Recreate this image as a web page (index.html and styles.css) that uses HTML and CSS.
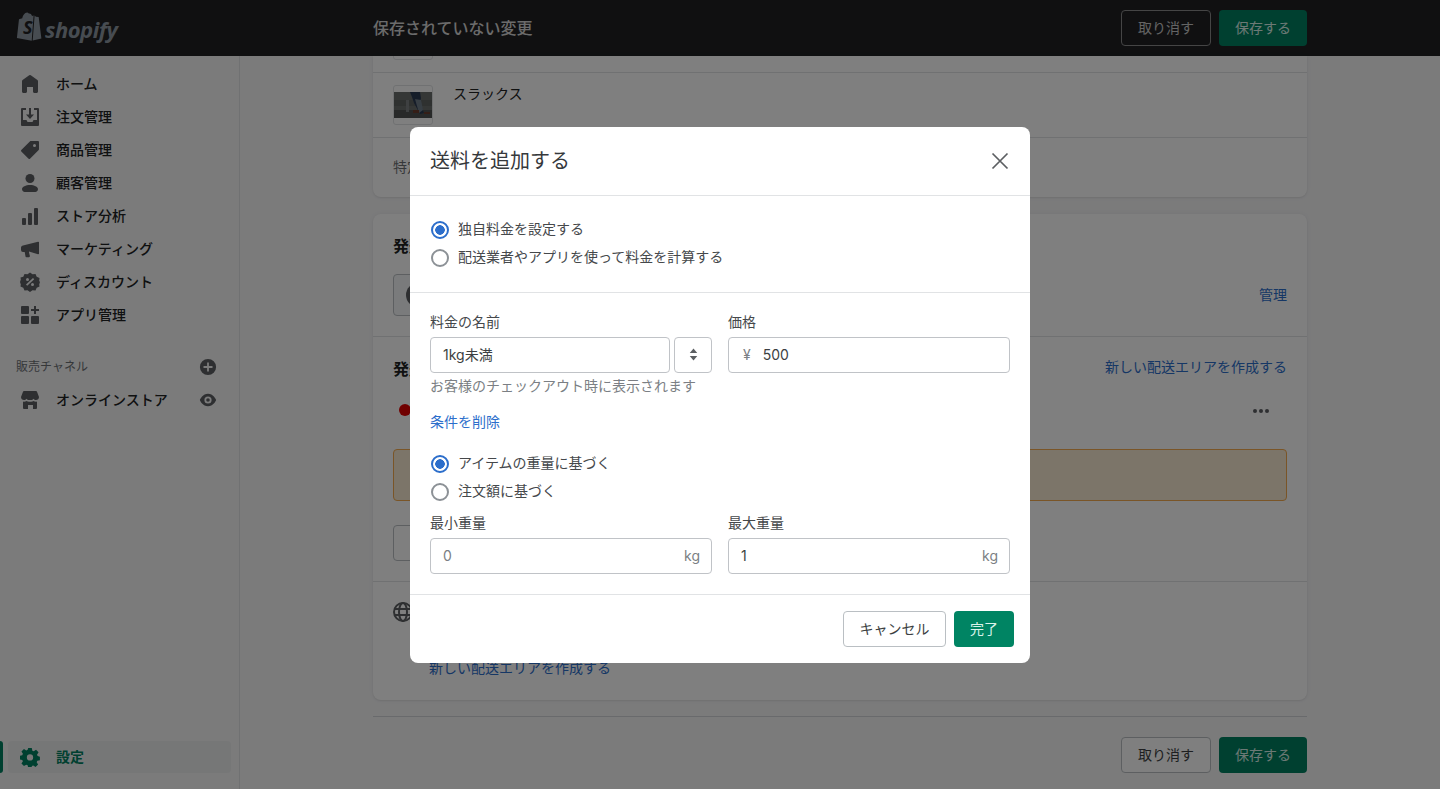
FILE: index.html
```html
<!DOCTYPE html>
<html lang="ja">
<head>
    <meta charset="UTF-8">
    <title>送料を追加する</title>
    <link rel="stylesheet" href="styles.css">
</head>
<body>
    <header class="topbar">
        <div class="logo">
            <svg class="logo-bag" viewBox="0 0 26 30" width="26" height="30">
                <path d="M17.6 3.6c-.3-.1-1.2.3-1.5.4C15.5 2.300 14.500 1.500 13.200 1.500h-.4C12.300.9 11.700.6 11.100.6 8.600.7 6.800 3.900 6.300 6.200L3.800 7c-.8.200-.8.300-.9 1L.9 26l14.800 2.800z" />
                <path d="M18.600 3.600 19.900 4.800l2.500.2c.2 0 .3.100.3.300L25.400 26.400 16.700 28.600z" />
                <text x="7" y="22" class="logo-s">S</text>
            </svg>
            <span class="logo-text">shopify</span>
        </div>
        <div class="topbar-main">
            <span class="topbar-title">保存されていない変更</span>
            <div class="actions">
                <button class="btn btn-dark">取り消す</button>
                <button class="btn btn-green">保存する</button>
            </div>
        </div>
    </header>

    <div class="frame">
        <nav class="sidebar">
            <ul class="nav">
                <li class="nav-item">
                    <svg class="icon" viewBox="0 0 20 20"><path d="M18 7.300V17.500c0 .8-.7 1.500-1.500 1.500h-2c-.8 0-1.500-.7-1.500-1.500V13H7v4.500C7 18.300 6.300 19 5.500 19h-2C2.700 19 2 18.300 2 17.500V7.300c0-.5.200-.9.600-1.200l6.600-4.900a1.500 1.500 0 0 1 1.600 0l6.600 4.900c.4.300.6.700.6 1.200z"/></svg>
                    ホーム
                </li>
                <li class="nav-item">
                    <svg class="icon" viewBox="0 0 20 20"><path d="M2 1h4v2H3v10h3.500l1 2h5l1-2H17V3h-3V1h4a1 1 0 0 1 1 1v16a1 1 0 0 1-1 1H2a1 1 0 0 1-1-1V2a1 1 0 0 1 1-1z"/><path d="M9 1h2v6.500h3L10 12 6 7.500h3z"/></svg>
                    注文管理
                </li>
                <li class="nav-item">
                    <svg class="icon" viewBox="0 0 20 20"><path d="M18 1h-7.200c-.3 0-.5.100-.7.300L1.300 10a1 1 0 0 0 0 1.400l7.300 7.300a1 1 0 0 0 1.400 0l8.700-8.700c.2-.2.300-.5.300-.7V2a1 1 0 0 0-1-1zm-3.500 6a1.500 1.500 0 1 1 0-3 1.500 1.500 0 0 1 0 3z"/></svg>
                    商品管理
                </li>
                <li class="nav-item">
                    <svg class="icon" viewBox="0 0 20 20"><circle cx="10" cy="5.500" r="4.500"/><path d="M10 12c-4.200 0-8 1.700-8 4.200C2 18.300 4 19 6 19h8c2 0 4-.7 4-2.800 0-2.500-3.800-4.200-8-4.200z"/></svg>
                    顧客管理
                </li>
                <li class="nav-item">
                    <svg class="icon" viewBox="0 0 20 20"><rect x="2" y="12" width="4" height="7" rx="1"/><rect x="8" y="7" width="4" height="12" rx="1"/><rect x="14" y="2" width="4" height="17" rx="1"/></svg>
                    ストア分析
                </li>
                <li class="nav-item">
                    <svg class="icon" viewBox="0 0 20 20"><path d="M19 3v12l-1 .3L9 12.500V13.500l.9 3.500a1 1 0 0 1-1 1.200H6.500a1 1 0 0 1-1-.8L4.700 13H3a2 2 0 0 1-2-2V8.500C1 7.500 2 6.800 3 6.500L18 2.700z"/></svg>
                    マーケティング
                </li>
                <li class="nav-item">
                    <svg class="icon" viewBox="0 0 20 20"><path fill-rule="evenodd" d="M10 .5l2.500 1.800 3-.3 1.200 2.800 2.800 1.300-.3 3L20 10l-.8 2.400.3 2-2.800 1.300-1.200 2.800-3-.3L10 20l-2.500-1.800-3 .3-1.200-2.800-2.800-1.300.3-2L0 10l.8-2.400-.3-2 2.800-.8L4.500 2l3 .3zM13 6l-7 6.500 1.200 1.300 7-6.500zM7.500 6a1.500 1.500 0 1 0 0 3 1.500 1.500 0 0 0 0-3zm5 5a1.500 1.500 0 1 0 0 3 1.500 1.500 0 0 0 0-3z"/></svg>
                    ディスカウント
                </li>
                <li class="nav-item">
                    <svg class="icon" viewBox="0 0 20 20"><rect x="1" y="1" width="8" height="8" rx="1"/><rect x="1" y="11" width="8" height="8" rx="1"/><rect x="11" y="11" width="8" height="8" rx="1"/><path d="M14 1h2v3h3v2h-3v3h-2V6h-3V4h3z"/></svg>
                    アプリ管理
                </li>
            </ul>

            <div class="channel-head">
                <span>販売チャネル</span>
                <svg class="icon-small" viewBox="0 0 20 20"><path d="M10 1a9 9 0 1 0 0 18 9 9 0 0 0 0-18zm1 10v4H9v-4H5V9h4V5h2v4h4v2z"/></svg>
            </div>
            <div class="nav-item nav-store">
                <svg class="icon" viewBox="0 0 20 20"><path d="M4 1h12c.5 0 .9.300 1 .7L19 7c0 1.700-1.300 3-3 3-1 0-2-.5-2.500-1.300C13 9.500 12 10 11 10h-2c-1 0-2-.5-2.500-1.300C6 9.500 5 10 4 10 2.300 10 1 8.700 1 7l2-5.300c.1-.4.5-.7 1-.7z"/><path d="M3 11.500c.4.100.7.200 1 .2 1 0 1.800-.3 2.500-.8.700.5 1.500.8 2.500.8h2c1 0 1.800-.3 2.500-.8.700.5 1.500.8 2.500.8.300 0 .6-.1 1-.2V18a1 1 0 0 1-1 1h-3v-4H8v4H4a1 1 0 0 1-1-1z"/></svg>
                <span class="nav-grow">オンラインストア</span>
                <svg class="icon-small" viewBox="0 0 20 20"><path fill-rule="evenodd" d="M10 3C4.500 3 1 9 1 10s3.500 7 9 7 9-6 9-7-3.500-7-9-7zm0 11a4 4 0 1 1 0-8 4 4 0 0 1 0 8zm0-2a2 2 0 1 0 0-4 2 2 0 0 0 0 4z"/></svg>
            </div>

            <div class="nav-item nav-settings">
                <svg class="icon" viewBox="0 0 20 20"><path fill-rule="evenodd" d="M8 0h4l.6 3 1.500.7L16.700 2l2.800 2.800-1.700 2.600.7 1.600 2.500.6v4l-2.900.6-.7 1.500 1.600 2.500-2.800 2.800-2.600-1.600-1.600.6L12 22H8l-.6-2.800-1.600-.7-2.500 1.600L.5 17.300l1.600-2.500-.7-1.500L-1.500 12.700v-4l2.900-.6.7-1.600L.5 3.900 3.300 1.100l2.500 1.600 1.600-.7zM10 7a3.500 3.500 0 1 0 0 7 3.500 3.500 0 0 0 0-7z" transform="translate(1 1) scale(.9)"/></svg>
                設定
            </div>
        </nav>

        <main class="main">
            <div class="content">
                <section class="card">
                    <div class="product product-cut">
                        <div class="thumb"></div>
                    </div>
                    <div class="product">
                        <div class="thumb">
                            <svg viewBox="0 0 38 26" width="38" height="26">
                                <rect width="38" height="26" fill="#6a6e6d"/>
                                <rect y="8" width="38" height="6" fill="#5e6261"/>
                                <rect y="18" width="38" height="8" fill="#505352"/>
                                <path d="M16 0h10l1 6-1 5 4 10-4 1-6-11-2-6z" fill="#2b3a52"/>
                                <path d="M21 7l6 1 2 10-4 3z" fill="#6f7c89"/>
                                <rect x="12" y="8" width="3" height="12" fill="#7d8182"/>
                                <rect x="19" y="18" width="6" height="3" fill="#6b3d2e"/>
                                <rect x="30" y="20" width="6" height="2" fill="#6b3d2e"/>
                            </svg>
                        </div>
                        <span class="product-name">スラックス</span>
                    </div>
                    <div class="card-note">特定</div>
                </section>

                <section class="card">
                    <div class="card-section">
                        <h2 class="card-title">発送元</h2>
                        <div class="origin-row">
                            <div class="origin-box"><span class="origin-dot"></span></div>
                            <a class="link">管理</a>
                        </div>
                    </div>
                    <div class="card-section">
                        <div class="title-row">
                            <h2 class="card-title">発送先</h2>
                            <a class="link">新しい配送エリアを作成する</a>
                        </div>
                        <div class="zone-row">
                            <span class="zone-dot"></span>
                            <span class="zone-more"><i></i><i></i><i></i></span>
                        </div>
                        <div class="warning"><span class="warning-dot"></span></div>
                        <button class="btn btn-plain zone-btn"></button>
                    </div>
                    <div class="card-section rest">
                        <svg class="globe" viewBox="0 0 20 20" fill="none" stroke="#5c5f62" stroke-width="2">
                            <circle cx="10" cy="10" r="9"/>
                            <ellipse cx="10" cy="10" rx="4" ry="9"/>
                            <path d="M1.500 7h17M1.500 13h17"/>
                        </svg>
                        <a class="link rest-link">新しい配送エリアを作成する</a>
                    </div>
                </section>

                <div class="page-actions">
                    <button class="btn btn-plain">取り消す</button>
                    <button class="btn btn-green">保存する</button>
                </div>
            </div>
        </main>
    </div>

    <div class="overlay">
        <div class="modal">
            <div class="modal-head">
                <h1>送料を追加する</h1>
                <svg class="close" viewBox="0 0 20 20" fill="none" stroke="#5c5f62" stroke-width="1.700"><path d="M2.500 2.500l15 15M17.500 2.500l-15 15"/></svg>
            </div>

            <div class="modal-section">
                <label class="radio-row"><span class="radio checked"></span>独自料金を設定する</label>
                <label class="radio-row"><span class="radio"></span>配送業者やアプリを使って料金を計算する</label>
            </div>

            <div class="modal-section">
                <div class="fields">
                    <div class="field">
                        <div class="field-label">料金の名前</div>
                        <div class="input-group">
                            <div class="input grow"><span class="value">1kg未満</span></div>
                            <div class="input stepper">
                                <svg viewBox="0 0 10 14" width="11" height="15"><path d="M5 1.500l3.500 4h-7zM5 12.500l-3.500-4h7z" fill="#5c5f62"/></svg>
                            </div>
                        </div>
                        <div class="help">お客様のチェックアウト時に表示されます</div>
                    </div>
                    <div class="field">
                        <div class="field-label">価格</div>
                        <div class="input"><span class="affix yen">¥</span><span class="value">500</span></div>
                    </div>
                </div>

                <a class="link remove">条件を削除</a>

                <div class="radios">
                    <label class="radio-row"><span class="radio checked"></span>アイテムの重量に基づく</label>
                    <label class="radio-row"><span class="radio"></span>注文額に基づく</label>
                </div>

                <div class="fields weights">
                    <div class="field">
                        <div class="field-label">最小重量</div>
                        <div class="input"><span class="placeholder grow">0</span><span class="affix unit">kg</span></div>
                    </div>
                    <div class="field">
                        <div class="field-label">最大重量</div>
                        <div class="input"><span class="value grow">1</span><span class="affix unit">kg</span></div>
                    </div>
                </div>
            </div>

            <div class="modal-foot">
                <button class="btn btn-plain">キャンセル</button>
                <button class="btn btn-green btn-done">完了</button>
            </div>
        </div>
    </div>
</body>
</html>
```

FILE: styles.css
```css
* {
    box-sizing: border-box;
}

html, body {
    height: 100%;
}

body {
    margin: 0;
    overflow: hidden;
    background: #f6f6f7;
    color: #202223;
    font-family: Inter, "Noto Sans CJK JP", sans-serif;
    font-size: 14px;
    line-height: 20px;
}

h1, h2, ul {
    margin: 0;
    padding: 0;
}

.link {
    color: #2c6ecb;
}

/* top bar */
.topbar {
    height: 56px;
    display: flex;
    background: #202123;
}

.logo {
    width: 240px;
    padding: 12px 0 0 16px;
    display: flex;
    align-items: flex-start;
    gap: 3px;
}

.logo-bag {
    fill: #8f98a3;
}

.logo-s {
    font: italic 700 18px "Open Sans", sans-serif;
    fill: #202123;
}

.logo-text {
    color: #8f98a3;
    font: italic 700 22px/34px "Open Sans", sans-serif;
    letter-spacing: -0.5px;
}

.topbar-main {
    width: 934px;
    margin-left: 133px;
    display: flex;
    align-items: center;
    justify-content: space-between;
}

.topbar-title {
    color: #d6d6d6;
    font-size: 16px;
    font-weight: 500;
}

.actions {
    display: flex;
    gap: 8px;
}

/* buttons */
.btn {
    height: 36px;
    padding: 0;
    border-radius: 4px;
    font: inherit;
    white-space: nowrap;
    cursor: pointer;
}

.btn-dark {
    width: 90px;
    background: transparent;
    border: 1px solid #8a8a8a;
    color: #c8c8c8;
}

.btn-green {
    width: 88px;
    background: #008060;
    border: 0;
    color: #d9f2ea;
}

.btn-plain {
    width: 90px;
    background: #fff;
    border: 1px solid #babfc3;
    color: #3c3f42;
}

.btn-done {
    width: 60px;
    background: #008463;
}

/* sidebar */
.frame {
    height: calc(100vh - 56px);
    display: flex;
}

.sidebar {
    width: 240px;
    padding: 11px 0 16px;
    display: flex;
    flex-direction: column;
    border-right: 1px solid #e1e3e5;
}

.nav {
    list-style: none;
}

.nav-item {
    height: 33px;
    padding-left: 20px;
    display: flex;
    align-items: center;
    gap: 16px;
    font-weight: 500;
}

.icon {
    width: 20px;
    height: 20px;
    fill: #5c5f62;
    flex: none;
}

.icon-small {
    width: 18px;
    height: 18px;
    fill: #5c5f62;
    flex: none;
}

.channel-head {
    margin-top: 20px;
    padding: 0 22px 0 16px;
    height: 32px;
    display: flex;
    align-items: center;
    justify-content: space-between;
    color: #6d7175;
    font-size: 12px;
}

.nav-store {
    padding-right: 22px;
}

.nav-grow {
    flex: 1;
}

.nav-settings {
    position: relative;
    height: 32px;
    margin: auto 8px 0;
    padding-left: 12px;
    border-radius: 4px;
    background: #edeeef;
    color: #008060;
    font-weight: 700;
}

.nav-settings::before {
    content: "";
    position: absolute;
    left: -8px;
    top: 0;
    bottom: 0;
    width: 3px;
    background: #008060;
    border-radius: 0 3px 3px 0;
}

.nav-settings .icon {
    fill: #008060;
}

/* page behind the modal */
.main {
    flex: 1;
}

.content {
    width: 934px;
    margin: 0 auto;
}

.card {
    margin-bottom: 17px;
    background: #fff;
    border-radius: 0 0 8px 8px;
    box-shadow: 0 0 5px rgba(23, 24, 24, 0.05), 0 1px 2px rgba(0, 0, 0, 0.07);
}

.card + .card {
    margin-bottom: 16px;
    border-radius: 8px;
}

.product {
    height: 65px;
    padding: 12px 20px 0;
    display: flex;
    gap: 20px;
    border-bottom: 1px solid #e1e3e5;
}

.product-cut {
    height: 17px;
    padding-top: 0;
    overflow: hidden;
    align-items: flex-end;
}

.product-cut .thumb {
    flex: none;
    margin-bottom: 12px;
}

.product-name {
    margin-top: -1px;
}

.thumb {
    width: 40px;
    height: 40px;
    flex: none;
    display: flex;
    align-items: center;
    justify-content: center;
    border: 1px solid #e1e3e5;
    border-radius: 3px;
}

.card-note {
    height: 59px;
    padding: 19px 20px 0;
    color: #6d7175;
}

.card-section {
    padding: 20px;
    border-bottom: 1px solid #e1e3e5;
}

.card-title {
    font-size: 16px;
    line-height: 24px;
    font-weight: 700;
}

.origin-row {
    margin-top: 16px;
    display: flex;
    align-items: center;
    justify-content: space-between;
}

.origin-box {
    width: 500px;
    height: 42px;
    padding: 8px 12px;
    border: 1px solid #babfc3;
    border-radius: 4px;
    background: #f4f6f8;
}

.origin-dot {
    display: block;
    width: 24px;
    height: 24px;
    border-radius: 50%;
    background: #5c5f62;
}

.title-row {
    display: flex;
    align-items: flex-start;
    justify-content: space-between;
}

.zone-row {
    margin-top: 17px;
    height: 24px;
    padding: 0 18px 0 6px;
    display: flex;
    align-items: center;
    justify-content: space-between;
}

.zone-dot {
    width: 12px;
    height: 12px;
    border-radius: 50%;
    background: #e00000;
}

.zone-more {
    margin-top: 2px;
    display: flex;
    gap: 2px;
}

.zone-more i {
    width: 4px;
    height: 4px;
    border-radius: 50%;
    background: #5c5f62;
}

.warning {
    height: 52px;
    margin-top: 27px;
    padding: 16px;
    border: 1px solid #f5ab4e;
    border-radius: 4px;
    background: #f8ead2;
}

.warning-dot {
    display: block;
    width: 18px;
    height: 18px;
    border-radius: 50%;
    background: #b98900;
}

.zone-btn {
    display: block;
    width: 160px;
    margin-top: 24px;
}

.rest {
    height: 118px;
    border-bottom: 0;
}

.globe {
    display: block;
    width: 20px;
    height: 20px;
}

.rest-link {
    display: block;
    margin: 36px 0 0 36px;
}

.page-actions {
    padding-top: 20px;
    display: flex;
    justify-content: flex-end;
    gap: 8px;
    border-top: 1px solid #d2d5d8;
}

/* modal */
.overlay {
    position: fixed;
    inset: 0;
    display: flex;
    align-items: center;
    justify-content: center;
    background: rgba(0, 0, 0, 0.5);
}

.modal {
    width: 620px;
    background: #fff;
    border-radius: 8px;
    color: #45484b;
}

.modal-head {
    height: 69px;
    padding: 0 20px;
    display: flex;
    align-items: center;
    justify-content: space-between;
    border-bottom: 1px solid #e1e3e5;
}

.modal-head h1 {
    font-size: 20px;
    line-height: 28px;
    font-weight: 400;
    color: #36393c;
}

.close {
    width: 20px;
    height: 20px;
}

.modal-section {
    padding: 19px 20px 21px;
    border-bottom: 1px solid #e1e3e5;
}

.modal-section + .modal-section {
    padding-bottom: 20px;
}

.radio-row {
    height: 28px;
    display: flex;
    align-items: center;
    gap: 9px;
}

.radio {
    width: 18px;
    height: 18px;
    margin: 2px 0 0 1px;
    flex: none;
    border: 2px solid #8c9196;
    border-radius: 50%;
    background: #fff;
}

.radio.checked {
    border-color: #2c6ecb;
    background: radial-gradient(circle, #2c6ecb 0 4.500px, #fff 5px);
}

.fields {
    display: grid;
    grid-template-columns: 282px 282px;
    gap: 16px;
}

.field-label {
    margin-bottom: 5px;
}

.input-group {
    display: flex;
    gap: 4px;
}

.input {
    height: 36px;
    padding: 0 12px;
    display: flex;
    align-items: center;
    border: 1px solid #c0c3c7;
    border-radius: 4px;
    background: #fff;
}

.grow {
    flex: 1;
}

.stepper {
    width: 38px;
    padding: 0;
    justify-content: center;
}

.value {
    color: #3c3f42;
}

.placeholder,
.affix {
    color: #7b7f84;
}

.yen {
    margin: 0 12px 0 2px;
}

.unit {
    margin-right: -1px;
}

.help {
    margin-top: 3px;
    color: #7b7f84;
}

.remove {
    display: block;
    margin-top: 16px;
}

.radios {
    margin-top: 17px;
}

.weights {
    margin-top: 8px;
}

.modal-foot {
    padding: 16px;
    display: flex;
    justify-content: flex-end;
    gap: 8px;
}

.modal-foot .btn-plain {
    width: 103px;
}
```
